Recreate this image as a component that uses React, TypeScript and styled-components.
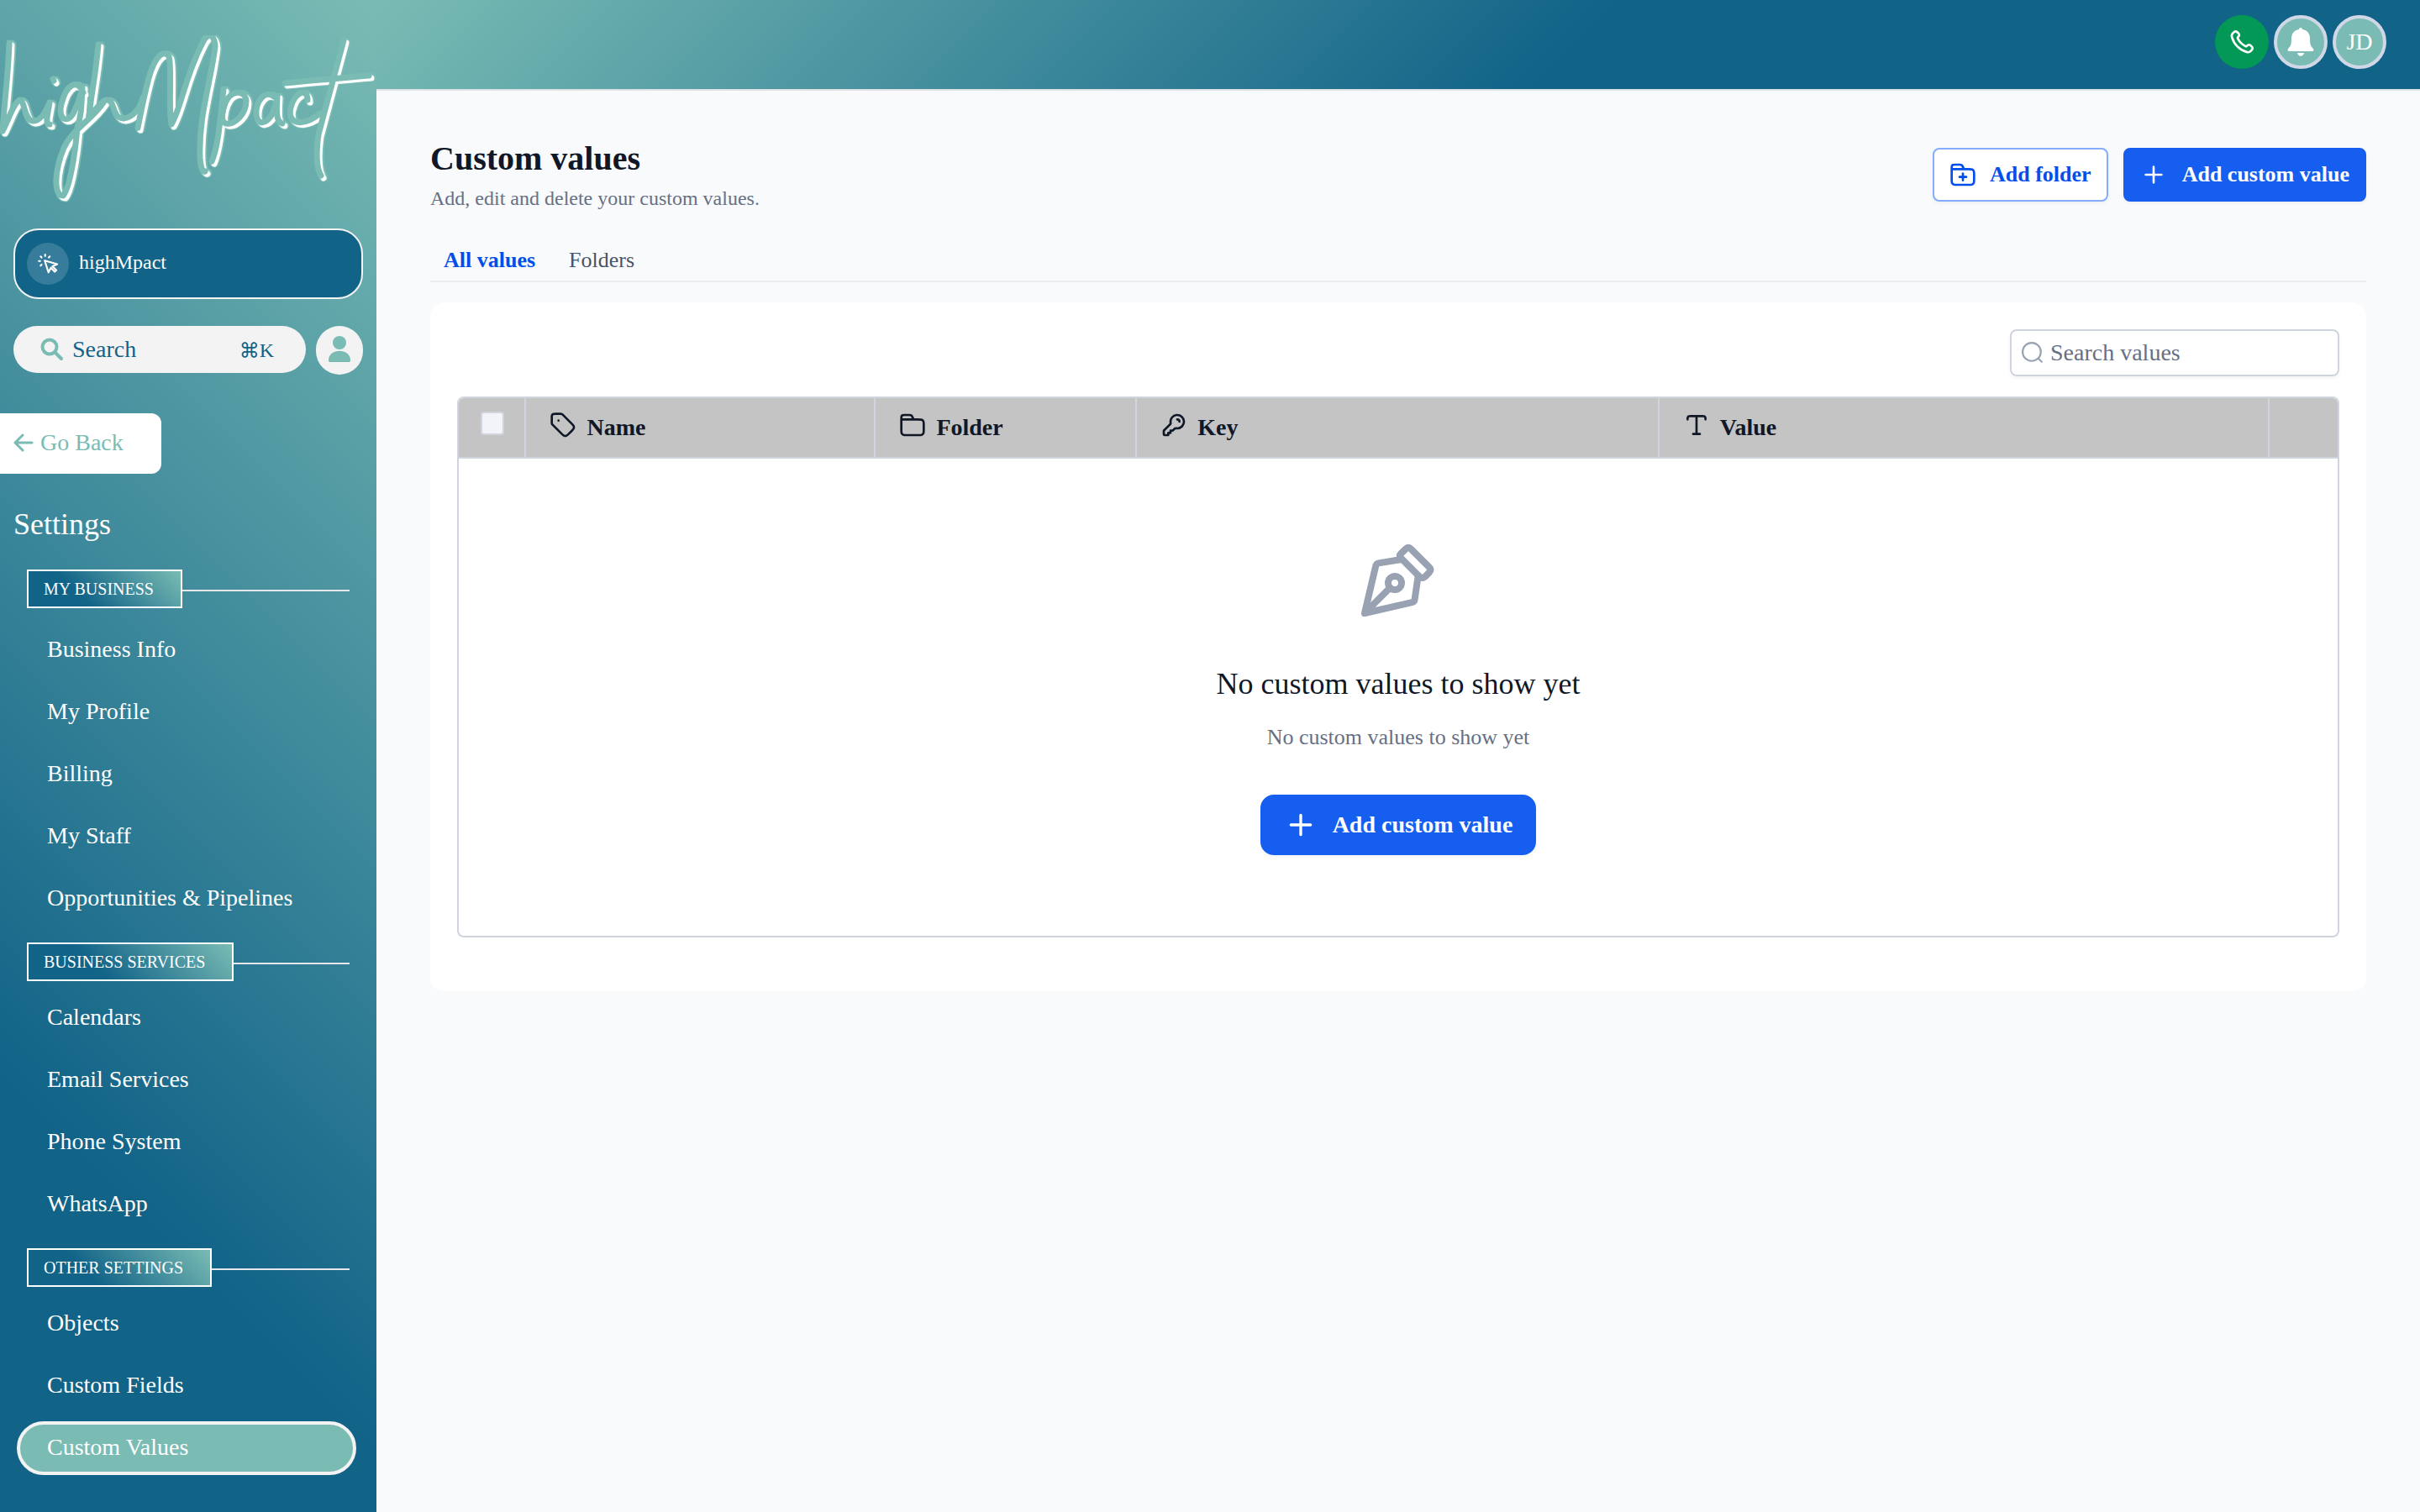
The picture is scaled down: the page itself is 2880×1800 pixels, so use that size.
import React from 'react';
import styled, { createGlobalStyle } from 'styled-components';

const serif = `"Liberation Serif", "Times New Roman", Inter, serif`;
const teal = '#7abcb4';
const navy = '#116388';

const GlobalStyle = createGlobalStyle`
  *, *::before, *::after { box-sizing: border-box; }
  body { margin: 0; background: #f9fafb; font-family: ${serif}; color: #101828; }
  button, input { font-family: inherit; }
`;

const Shell = styled.div`
  display: grid;
  grid-template-columns: 448px minmax(0, 1fr);
  min-height: 100vh;
`;

const Sidebar = styled.aside`
  background: linear-gradient(225deg, ${teal}, ${navy} 76%);
  color: #fff;
  padding: 42px 16px 40px;
`;

const LogoSvg = styled.svg`
  display: block;
  width: 448px;
  height: 200px;
  margin-left: -16px;
`;

const Account = styled.button`
  display: flex;
  align-items: center;
  gap: 12px;
  width: 100%;
  height: 84px;
  margin-top: 30px;
  padding: 0 14px;
  border: 2px solid #f3f3f3;
  border-radius: 30px;
  background: ${navy};
  color: #fff;
  font-size: 24px;
`;

const AccountIcon = styled.span`
  display: grid;
  place-items: center;
  width: 50px;
  height: 50px;
  border-radius: 50%;
  background: rgba(255, 255, 255, 0.16);
`;

const AccountName = styled.span`
  padding-bottom: 4px;
`;

const SearchRow = styled.div`
  display: flex;
  align-items: flex-start;
  gap: 12px;
  margin-top: 32px;
`;

const SearchButton = styled.button`
  display: flex;
  align-items: center;
  gap: 10px;
  flex: 1;
  height: 56px;
  padding: 0 38px 0 32px;
  border: 0;
  border-radius: 28px;
  background: #f3f3f3;
  color: ${navy};
  font-size: 28px;
`;

const Shortcut = styled.span`
  margin-left: auto;
  font-size: 24px;
`;

const PersonButton = styled.button`
  display: grid;
  place-items: center;
  width: 56px;
  height: 58px;
  padding: 0 0 4px;
  border: 0;
  border-radius: 28px;
  background: #f3f3f3;
`;

const BackLink = styled.a`
  display: flex;
  align-items: center;
  gap: 8px;
  width: 192px;
  height: 72px;
  margin: 46px 0 0 -16px;
  padding: 0 16px 2px;
  border-radius: 0 12px 12px 0;
  background: #fff;
  color: ${teal};
  font-size: 28px;
  text-decoration: none;
`;

const SidebarTitle = styled.h2`
  margin: 40px 0 34px;
  font-size: 36px;
  font-weight: 400;
  line-height: 40px;
`;

const GroupHeading = styled.h3`
  display: flex;
  align-items: center;
  margin: 0 16px;
  font-size: 20px;
  font-weight: 400;

  &::after {
    content: '';
    flex: 1;
    height: 2px;
    margin-top: 4px;
    background: #e5e7eb;
  }
`;

const GroupTag = styled.span`
  height: 46px;
  padding: 0 32px 0 18px;
  border: 2px solid #fff;
  background: linear-gradient(225deg, ${teal}, ${navy} 67%);
  line-height: 42px;
`;

const NavList = styled.ul`
  margin: 12px 8px 20px 4px;
  padding: 0;
  list-style: none;

  section:first-child > & { margin-top: 18px; }
`;

const NavItem = styled.a<{ $active?: boolean }>`
  display: block;
  height: 64px;
  margin-bottom: 10px;
  padding-left: 32px;
  border: 4px solid ${p => (p.$active ? '#f3f3f3' : 'transparent')};
  border-radius: 32px;
  background: ${p => (p.$active ? teal : 'transparent')};
  color: #fff;
  font-size: 28px;
  line-height: 54px;
  text-decoration: none;
`;

const Column = styled.div`
  display: flex;
  flex-direction: column;
  min-width: 0;
`;

const TopBar = styled.header`
  display: flex;
  justify-content: flex-end;
  gap: 6px;
  height: 108px;
  padding: 18px 40px 0;
  border-bottom: 2px solid #e0e3e6;
  background: linear-gradient(135deg, ${teal}, ${navy} 58%);
`;

const RoundButton = styled.button<{ $call?: boolean }>`
  display: grid;
  place-items: center;
  width: 64px;
  height: 64px;
  padding: 0;
  border: ${p => (p.$call ? '0' : '4px solid #d0d8e8')};
  border-radius: 50%;
  background: ${p => (p.$call ? '#039855' : teal)};
  color: #fff;
  font-size: 28px;
`;

const Main = styled.main`
  padding: 60px 64px;
`;

const PageHead = styled.div`
  display: flex;
  align-items: flex-start;
  justify-content: space-between;
`;

const PageTitle = styled.h1`
  margin: 0;
  font-size: 40px;
  line-height: 42px;
`;

const Subtitle = styled.p`
  margin: 12px 0 0;
  color: #667085;
  font-size: 24px;
  line-height: 28px;
`;

const Actions = styled.div`
  display: flex;
  gap: 18px;
  padding-top: 8px;
`;

const ActionButton = styled.button<{ $outline?: boolean; $large?: boolean }>`
  display: inline-flex;
  align-items: center;
  gap: ${p => (p.$outline ? 16 : 18)}px;
  height: ${p => (p.$large ? 72 : 64)}px;
  padding: 0 ${p => (p.$large ? 26 : 18)}px;
  border: 2px solid ${p => (p.$outline ? '#84adff' : '#155eef')};
  border-radius: ${p => (p.$large ? 16 : 8)}px;
  background: ${p => (p.$outline ? '#fff' : '#155eef')};
  color: ${p => (p.$outline ? '#004eeb' : '#fff')};
  box-shadow: 0 2px 4px rgba(16, 24, 40, 0.05);
  font-size: ${p => (p.$large ? 28 : 26)}px;
  font-weight: 700;
`;

const Tabs = styled.nav`
  display: flex;
  gap: 40px;
  margin-top: 40px;
  padding: 0 16px 4px;
  border-bottom: 2px solid #eaecf0;
`;

const Tab = styled.a<{ $active?: boolean }>`
  color: ${p => (p.$active ? '#004eeb' : '#475467')};
  font-size: 26px;
  font-weight: ${p => (p.$active ? 700 : 400)};
  line-height: 40px;
  text-decoration: none;
`;

const Card = styled.section`
  margin-top: 24px;
  padding: 32px 32px 64px;
  border-radius: 16px;
  background: #fff;
`;

const Toolbar = styled.div`
  display: flex;
  justify-content: flex-end;
  margin-bottom: 24px;
`;

const SearchField = styled.label`
  display: flex;
  align-items: center;
  gap: 8px;
  width: 392px;
  height: 56px;
  padding: 0 12px;
  border: 2px solid #d0d5dd;
  border-radius: 8px;
  background: #fff;
  box-shadow: 0 2px 4px rgba(16, 24, 40, 0.05);
`;

const SearchInput = styled.input`
  flex: 1;
  min-width: 0;
  padding: 0;
  border: 0;
  outline: 0;
  background: transparent;
  color: #101828;
  font-size: 28px;

  &::placeholder { color: #667085; opacity: 1; }
`;

const TableFrame = styled.div`
  overflow: hidden;
  border: 2px solid #d0d5dd;
  border-radius: 8px;
`;

const Table = styled.table`
  width: 100%;
  border-collapse: separate;
  border-spacing: 0;
  table-layout: fixed;
`;

const Col = styled.col<{ $share?: string }>`
  width: ${p => p.$share ?? 'auto'};
`;

const HeadCell = styled.th`
  height: 72px;
  padding: 0 28px;
  border-right: 2px solid #d0d5dd;
  border-bottom: 2px solid #d0d5dd;
  background: #c4c4c4;
  font-size: 28px;
  text-align: left;

  &:first-child { padding: 0 26px; }
  &:last-child { border-right: 0; }
`;

const HeadLabel = styled.span`
  display: flex;
  align-items: center;
  gap: 12px;

  svg { margin-bottom: 6px; }
`;

const Checkbox = styled.input`
  display: block;
  appearance: none;
  width: 28px;
  height: 28px;
  margin: 0 0 10px;
  border: 2px solid #d0d5dd;
  border-radius: 4px;
  background: #f2f4f9;
`;

const EmptyCell = styled.td`
  padding: 96px 0;
  text-align: center;
`;

const EmptyIcon = styled.div`
  display: flex;
  justify-content: center;
  color: #98a2b3;
`;

const EmptyTitle = styled.h2`
  margin: 48px 0 0;
  font-size: 36px;
  font-weight: 400;
  line-height: 56px;
`;

const EmptyText = styled.p`
  margin: 16px 0 48px;
  color: #667085;
  font-size: 26px;
  line-height: 40px;
`;

const Icon = ({ size, stroke = 2, children }: { size: number; stroke?: number; children: React.ReactNode }) => (
  <svg width={size} height={size} viewBox="0 0 24 24" fill="none" stroke="currentColor" strokeWidth={stroke} strokeLinecap="round" strokeLinejoin="round" aria-hidden="true">
    {children}
  </svg>
);

const folderPath = 'M13 7l-1.116-2.231c-.32-.642-.481-.963-.72-1.198a2 2 0 00-.748-.462C10.1 3 9.74 3 9.022 3H5.2c-1.12 0-1.68 0-2.108.218a2 2 0 00-.874.874C2 4.52 2 5.08 2 6.2V7m0 0h15.2c1.68 0 2.52 0 3.162.327a3 3 0 011.311 1.311C22 9.28 22 10.12 22 11.8v4.4c0 1.68 0 2.52-.327 3.162a3 3 0 01-1.311 1.311C19.72 21 18.88 21 17.2 21H6.8c-1.68 0-2.52 0-3.162-.327a3 3 0 01-1.311-1.311C2 18.72 2 17.88 2 16.2V7z';

const PlusIcon = ({ size }: { size: number }) => <Icon size={size}><path d="M12 5v14M5 12h14" /></Icon>;
const FolderIcon = ({ plus, size }: { plus?: boolean; size: number }) => (
  <Icon size={size}><path d={folderPath} />{plus && <path d="M12 17v-6M9 14h6" />}</Icon>
);
const TagIcon = () => (
  <Icon size={32}><path d="M8 8h.01M2 5.2v4.475c0 .489 0 .733.055.963.05.204.13.4.24.579.123.201.296.374.642.72l7.669 7.669c1.188 1.188 1.782 1.782 2.467 2.004a3 3 0 001.854 0c.685-.222 1.28-.816 2.467-2.004l2.212-2.212c1.188-1.188 1.782-1.782 2.004-2.467a3 3 0 000-1.854c-.222-.685-.816-1.28-2.004-2.467l-7.669-7.669c-.346-.346-.519-.519-.72-.642a2.001 2.001 0 00-.579-.24C10.409 2 10.165 2 9.676 2H5.2c-1.12 0-1.68 0-2.108.218a2 2 0 00-.874.874C2 3.52 2 4.08 2 5.2z" /></Icon>
);
const KeyIcon = () => (
  <Icon size={32}><path d="M17 9a2 2 0 00-2-2m0 8a6 6 0 10-5.946-5.193c.058.434.087.651.068.789a.853.853 0 01-.117.346c-.068.121-.187.24-.426.479l-5.11 5.11c-.173.173-.26.26-.322.361a1 1 0 00-.12.29C3 17.296 3 17.418 3 17.663V19.4c0 .56 0 .84.109 1.054a1 1 0 00.437.437C3.76 21 4.04 21 4.6 21H7v-2h2v-2h2l1.580-1.580c.239-.239.358-.358.48-.426a.852.852 0 01.345-.117c.138-.02.355.01.789.068.264.036.533.054.807.054z" /></Icon>
);
const TypeIcon = () => (
  <Icon size={32}><path d="M4 7c0-.932 0-1.398.152-1.765a2 2 0 011.083-1.083C5.602 4 6.068 4 7 4h10c.932 0 1.398 0 1.765.152a2 2 0 011.083 1.083C20 5.602 20 6.068 20 7M9 20h6M12 4v16" /></Icon>
);
const PenIcon = () => (
  <Icon size={96}>
    <path d="M12.800 5.600l5.600 5.600q.8.600 1.500 0l1.300-1.300q.800-.800 0-1.600l-5.400-5.400q-.800-.8-1.600 0l-1.400 1.400q-.6.600 0 1.300z" />
    <path d="M2 22L5.300 8q.2-.800.900-.900L12.900 6M17.900 11.100l-1 6.800q-.1.700-.800.900L2 22l7.585-7.585" />
    <circle cx="11" cy="13" r="2" />
  </Icon>
);

const logoStrokes = [
  'M13 53C12 90 7 124 5 158C13 143 18 125 25 121C32 121 30 145 41 146C49 147 56 136 61 124C59 137 55 150 61 150',
  'M65 96l1 2',
  'M101 112C94 95 81 102 75 126C70 145 84 151 91 133C97 120 99 111 100 105C99 126 99 140 94 154C91 190 84 228 77 235C66 235 66 207 78 178C88 156 112 144 125 124',
  'M119 55C116 90 110 118 108 140C117 133 123 120 130 121C139 122 135 143 149 143C159 142 169 132 172 118',
  'M166 154C170 133 174 114 179 95C187 67 197 61 203 69C207 85 202 132 206 150C218 130 221 96 243 53C249 40 257 42 258 57C253 100 238 140 240 190C241 204 244 207 246 206',
  'M268 108C264 143 262 176 254 194',
  'M270 125C277 108 294 109 295 122C295 139 280 151 271 149C263 147 268 130 270 125',
  'M328 117C317 108 306 123 307 139C310 157 329 146 332 116C331 133 330 147 338 149',
  'M368 121C368 106 353 111 348 130C343 151 363 153 383 137',
  'M411 50C401 88 391 125 381 162C378 184 378 201 384 211',
  'M341 101C370 98 408 95 441 92',
];

const LogoLayer = ({ color, width, dx, dy }: { color: string; width: number; dx: number; dy: number }) => (
  <g stroke={color} strokeWidth={width} transform={`translate(${dx} ${dy})`}>
    {logoStrokes.map(d => <path key={d} d={d} />)}
  </g>
);

const Logo = () => (
  <LogoSvg viewBox="0 42 448 200" role="img" aria-label="highMpact" fill="none" strokeLinecap="round" strokeLinejoin="round">
    <LogoLayer color={teal} width={11} dx={1} dy={0} />
    <LogoLayer color="#fff" width={7} dx={1} dy={1} />
    <LogoLayer color={teal} width={7} dx={-2} dy={-2} />
  </LogoSvg>
);

const groups = [
  { title: 'MY BUSINESS', items: ['Business Info', 'My Profile', 'Billing', 'My Staff', 'Opportunities & Pipelines'] },
  { title: 'BUSINESS SERVICES', items: ['Calendars', 'Email Services', 'Phone System', 'WhatsApp'] },
  { title: 'OTHER SETTINGS', items: ['Objects', 'Custom Fields', 'Custom Values'] },
];

export default function App() {
  return (
    <>
      <GlobalStyle />
      <Shell>
        <Sidebar>
          <Logo />
          <Account type="button">
            <AccountIcon>
              <Icon size={26}><path d="M9 3.500V2M5.060 5.060L4 4M5.060 13L4 14.060M13 5.060L14.060 4M3.500 9H2M8.500 8.500l4.100 13 2.700-5.200 4.200 4.500 1.800-1.700-4.300-4.400 5.300-2.200z" /></Icon>
            </AccountIcon>
            <AccountName>highMpact</AccountName>
          </Account>
          <SearchRow>
            <SearchButton type="button">
              <svg width="28" height="28" viewBox="0 0 28 28" fill="none" stroke={teal} strokeWidth="4" strokeLinecap="round" aria-hidden="true"><circle cx="11" cy="11" r="8.500" /><path d="M17.500 17.500L25 25" /></svg>
              Search
              <Shortcut>⌘K</Shortcut>
            </SearchButton>
            <PersonButton type="button" aria-label="Contact">
              <svg width="28" height="32" viewBox="0 0 28 32" fill={teal} aria-hidden="true"><circle cx="14" cy="9" r="8" /><path d="M1 30C1 15 27 15 27 30q0 2-1 2H2q-1 0-1-2z" /></svg>
            </PersonButton>
          </SearchRow>
          <BackLink href="#">
            <svg width="24" height="22" viewBox="0 0 24 22" fill="none" stroke={teal} strokeWidth="3" strokeLinecap="round" strokeLinejoin="round" aria-hidden="true"><path d="M11 2L2 11l9 9M2 11h20" /></svg>
            Go Back
          </BackLink>
          <SidebarTitle>Settings</SidebarTitle>
          <nav aria-label="Settings">
            {groups.map(group => (
              <section key={group.title}>
                <GroupHeading><GroupTag>{group.title}</GroupTag></GroupHeading>
                <NavList>
                  {group.items.map(item => (
                    <li key={item}><NavItem href="#" $active={item === 'Custom Values'}>{item}</NavItem></li>
                  ))}
                </NavList>
              </section>
            ))}
          </nav>
        </Sidebar>
        <Column>
          <TopBar>
            <RoundButton type="button" $call aria-label="Call">
              <Icon size={32}><path d="M8.380 8.853a14.603 14.603 0 002.847 4.010 14.603 14.603 0 004.010 2.847c.124.060.187.090.265.112.280.082.625.023.862-.147.067-.048.124-.105.239-.219.350-.350.524-.524.700-.639a2 2 0 012.180 0c.176.115.350.290.700.640l.195.194c.532.531.797.797.942 1.082a2 2 0 010 1.806c-.145.285-.410.551-.942 1.082l-.157.158c-.530.530-.795.794-1.155.997-.400.224-1.020.386-1.478.384-.413-.001-.695-.081-1.260-.241a19.038 19.038 0 01-8.283-4.874A19.039 19.039 0 013.170 7.761c-.160-.564-.240-.846-.241-1.260a3.377 3.377 0 01.384-1.477c.202-.360.467-.625.997-1.155l.157-.158c.532-.530.798-.797 1.083-.941a2 2 0 011.805 0c.286.144.551.410 1.083.942l.195.194c.350.350.524.525.638.700a2 2 0 010 2.180c-.114.177-.289.352-.638.701-.115.114-.172.172-.220.238-.170.238-.228.582-.147.862.023.080.053.142.113.266z" /></Icon>
            </RoundButton>
            <RoundButton type="button" aria-label="Notifications">
              <svg width="32" height="36" viewBox="0 0 32 36" fill="currentColor" aria-hidden="true"><path d="M14 3a2 2 0 0 1 4 0c6 1 9 5 9 11 0 7 1 9 4 12 1 2 0 3-1 3H2c-1 0-2-1-1-3 3-3 4-5 4-12C5 8 8 4 14 3zM12 31h8c-1 5-7 5-8 0z" /></svg>
            </RoundButton>
            <RoundButton type="button">JD</RoundButton>
          </TopBar>
          <Main>
            <PageHead>
              <div>
                <PageTitle>Custom values</PageTitle>
                <Subtitle>Add, edit and delete your custom values.</Subtitle>
              </div>
              <Actions>
                <ActionButton type="button" $outline><FolderIcon plus size={32} />Add folder</ActionButton>
                <ActionButton type="button"><PlusIcon size={32} />Add custom value</ActionButton>
              </Actions>
            </PageHead>
            <Tabs>
              <Tab href="#" $active>All values</Tab>
              <Tab href="#">Folders</Tab>
            </Tabs>
            <Card>
              <Toolbar>
                <SearchField>
                  <Icon size={26}><g stroke="#98a2b3"><circle cx="11" cy="11" r="10" /><path d="M18.500 18.500L22 22" /></g></Icon>
                  <SearchInput type="search" placeholder="Search values" aria-label="Search values" />
                </SearchField>
              </Toolbar>
              <TableFrame>
                <Table>
                  <colgroup>
                    <Col $share="3.6%" />
                    <Col $share="18.6%" />
                    <Col $share="13.9%" />
                    <Col $share="27.8%" />
                    <Col $share="32.5%" />
                    <Col />
                  </colgroup>
                  <thead>
                    <tr>
                      <HeadCell><Checkbox type="checkbox" aria-label="Select all values" /></HeadCell>
                      <HeadCell><HeadLabel><TagIcon />Name</HeadLabel></HeadCell>
                      <HeadCell><HeadLabel><FolderIcon size={32} />Folder</HeadLabel></HeadCell>
                      <HeadCell><HeadLabel><KeyIcon />Key</HeadLabel></HeadCell>
                      <HeadCell><HeadLabel><TypeIcon />Value</HeadLabel></HeadCell>
                      <HeadCell aria-label="Actions" />
                    </tr>
                  </thead>
                  <tbody>
                    <tr>
                      <EmptyCell colSpan={6}>
                        <EmptyIcon><PenIcon /></EmptyIcon>
                        <EmptyTitle>No custom values to show yet</EmptyTitle>
                        <EmptyText>No custom values to show yet</EmptyText>
                        <ActionButton type="button" $large><PlusIcon size={40} />Add custom value</ActionButton>
                      </EmptyCell>
                    </tr>
                  </tbody>
                </Table>
              </TableFrame>
            </Card>
          </Main>
        </Column>
      </Shell>
    </>
  );
}
